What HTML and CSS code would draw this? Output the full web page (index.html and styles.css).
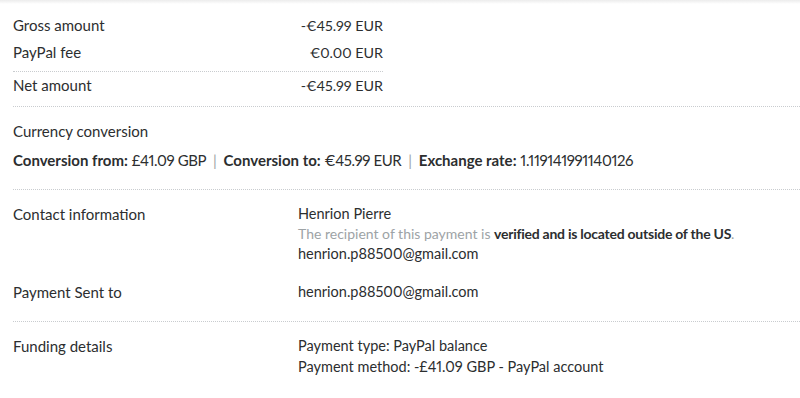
FILE: index.html
```html
<!DOCTYPE html>
<html lang="en">
<head>
<meta charset="utf-8">
<title>Transaction details</title>
<link rel="stylesheet" href="styles.css">
</head>
<body>
<div class="topshade"></div>
<main class="details">
  <section class="section amounts">
    <div class="amount-table">
      <div class="arow"><span>Gross amount</span><span class="amt">-€45.99 EUR</span></div>
      <div class="arow"><span>PayPal fee</span><span class="amt">€0.00 EUR</span></div>
      <div class="arow net"><span>Net amount</span><span class="amt">-€45.99 EUR</span></div>
    </div>
  </section>
  <section class="section conversion">
    <div class="line">Currency conversion</div>
    <div class="conv"><b>Conversion from:</b> <span class="num">£41.09 GBP</span> <span class="pipe">|</span> <b>Conversion to:</b> <span class="num">€45.99 EUR</span> <span class="pipe">|</span> <b>Exchange rate:</b> <span class="num">1.119141991140126</span></div>
  </section>
  <section class="section">
    <div class="pair">
      <div class="label">Contact information</div>
      <div class="value">
        <div class="line">Henrion Pierre</div>
        <div class="line muted">The recipient of this payment is <b class="strong">verified and is located outside of the US</b>.</div>
        <div class="line">henrion.p88500@gmail.com</div>
      </div>
    </div>
    <div class="pair spaced">
      <div class="label">Payment Sent to</div>
      <div class="value"><div class="line">henrion.p88500@gmail.com</div></div>
    </div>
  </section>
  <section class="section last">
    <div class="pair">
      <div class="label">Funding details</div>
      <div class="value">
        <div class="line">Payment type: PayPal balance</div>
        <div class="line tall">Payment method: -£41.09 GBP - PayPal account</div>
      </div>
    </div>
  </section>
</main>
</body>
</html>
```

FILE: styles.css
```css
html, body {
  margin: 0;
  padding: 0;
  background: #ffffff;
}
body {
  font-family: Lato, "Open Sans", "Liberation Sans", sans-serif;
  font-size: 15px;
  font-variant-numeric: proportional-nums;
  color: #2c2e2f;
  width: 800px;
  height: 398px;
  overflow: hidden;
}
.topshade {
  height: 4px;
  background: linear-gradient(#ececec, #ffffff);
}
.details {
  padding-left: 13px;
}
.section {
  border-bottom: 1px dotted #c9cccf;
  padding: 14px 0 19px;
}
.section.last {
  border-bottom: none;
}
.amounts {
  padding: 8px 0 7px;
}
.amount-table {
  width: 370px;
}
.arow {
  display: flex;
  justify-content: space-between;
  height: 27px;
  line-height: 27px;
}
.arow:nth-child(2) {
  padding-bottom: 5px;
  border-bottom: 1px dotted #c9cccf;
}
.amt {
  font-size: 14.3px;
}
.line {
  line-height: 20px;
}
.line.tall {
  line-height: 22px;
}
.conv {
  margin-top: 9px;
  font-size: 15px;
  line-height: 20px;
}
.conv b {
  font-weight: 700;
}
.conv .num {
  letter-spacing: -0.4px;
}
.pipe {
  color: #9da3a6;
  padding: 0 3px;
}
.pair {
  display: flex;
}
.pair.spaced {
  margin-top: 18px;
}
.label {
  width: 285px;
  line-height: 20px;
}
.value {
  font-size: 14.5px;
}
.muted {
  color: #9da3a6;
  font-size: 14px;
}
.strong {
  color: #2c2e2f;
  font-weight: 700;
  letter-spacing: -0.25px;
}
```
